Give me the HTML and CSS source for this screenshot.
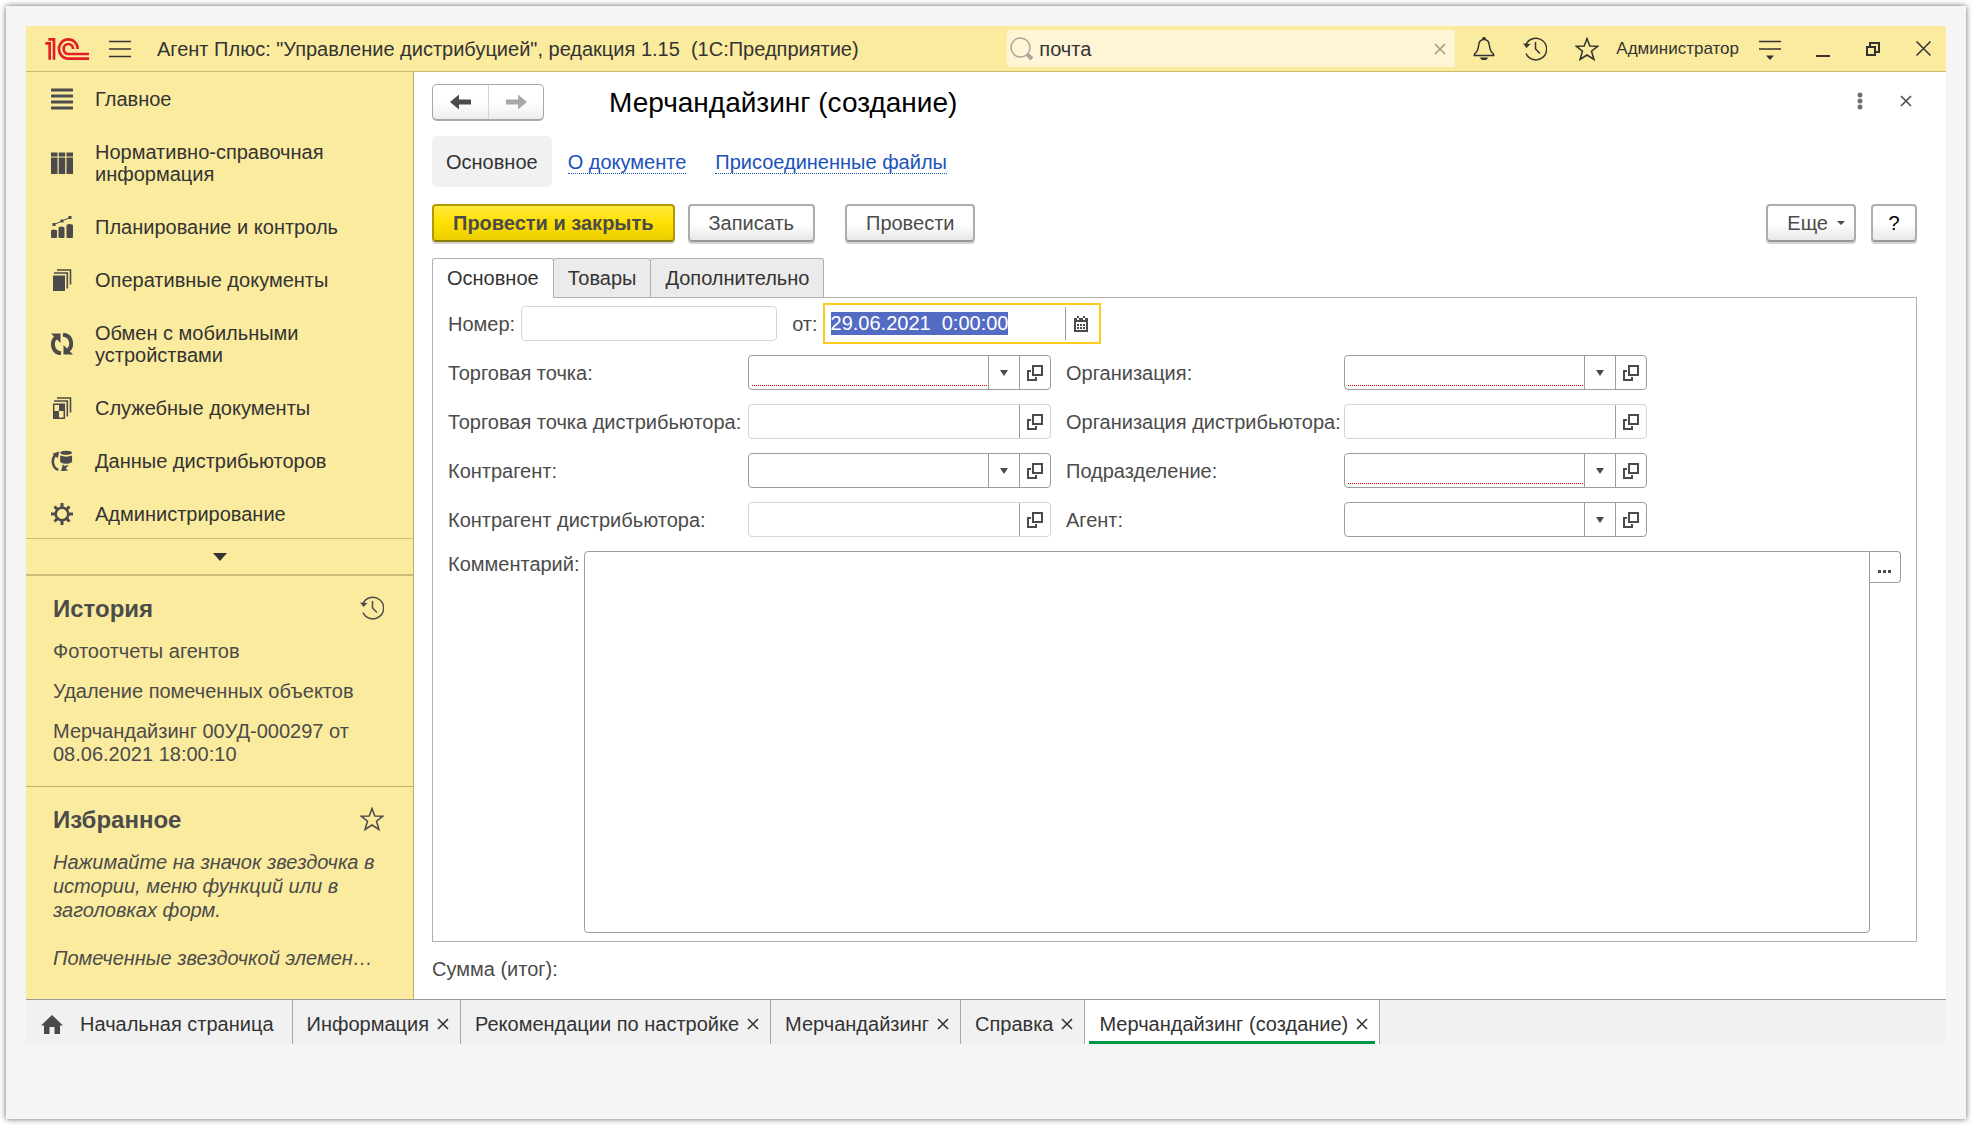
FILE: index.html
```html
<!DOCTYPE html>
<html lang="ru">
<head>
    <meta charset="UTF-8">
    <meta name="viewport" content="width=device-width, initial-scale=1.0">
    <title>Мерчандайзинг (создание)</title>
    <link rel="stylesheet" href="styles.css">
</head>
<body>
    <!-- shared icons -->
    <svg class="sprite" aria-hidden="true">
        <symbol id="i-history" viewBox="0 0 24 24">
            <path d="M3.2 7.2A10.8 10.8 0 1 1 3 16.5" fill="none" stroke="currentColor" stroke-width="1.5"/>
            <path d="M0 6.5l7.5.5-4 4z" fill="currentColor"/>
            <path d="M12.5 5v7l4.5 4.5" fill="none" stroke="currentColor" stroke-width="1.5"/>
        </symbol>
        <symbol id="i-star" viewBox="0 0 24 24">
            <path d="M12 1.5l2.8 7.4 8 .3-6.3 5 2.5 8.3-7-4.5-7 4.5 2.5-8.3-6.3-5 8-.3z" fill="none" stroke="currentColor" stroke-width="1.5"/>
        </symbol>
        <symbol id="i-close" viewBox="0 0 12 12">
            <path d="M1 1l10 10M11 1L1 11" fill="none" stroke="currentColor" stroke-width="1.6"/>
        </symbol>
        <symbol id="i-open" viewBox="0 0 16 16">
            <path d="M6 1h9v9H6z" fill="none" stroke="currentColor" stroke-width="2"/>
            <path d="M4 6H1v9h8v-3" fill="none" stroke="currentColor" stroke-width="2"/>
        </symbol>
        <symbol id="i-down" viewBox="0 0 8 6">
            <path d="M0 0h8L4 6z" fill="currentColor"/>
        </symbol>
    </svg>

    <div class="frame">
        <div class="app">
            <header class="topbar">
                <svg class="logo" viewBox="0 0 132 66" role="img" aria-label="1С">
                    <path d="M1 16H14V65M10 4H27V65M98 33A28 29 0 1 0 70 62H132M84 33A14 15 0 1 0 70 48H132" fill="none" stroke="#e01f26" stroke-width="8"/>
                </svg>
                <button class="icon-btn menu-btn" aria-label="Меню">
                    <svg width="22" height="18" viewBox="0 0 22 18"><path d="M0 1.5h22M0 9h22M0 16.5h22" stroke="currentColor" stroke-width="1.5"/></svg>
                </button>
                <div class="app-title">Агент Плюс: "Управление дистрибуцией", редакция 1.15&nbsp; (1С:Предприятие)</div>
                <div class="search">
                    <svg width="24" height="24" viewBox="0 0 24 24"><circle cx="10.5" cy="10.5" r="9.5" fill="none" stroke="#a9a79c" stroke-width="1.5"/><path d="M17 17l5 5" stroke="#a9a79c" stroke-width="4"/></svg>
                    <input type="text" value="почта" aria-label="Поиск">
                    <button class="icon-btn clear-btn" aria-label="Очистить"><svg width="12" height="12"><use href="#i-close"/></svg></button>
                </div>
                <div class="tools">
                    <button class="icon-btn" aria-label="Уведомления">
                        <svg width="22" height="24" viewBox="0 0 22 24">
                            <path d="M11 2.5c-3.5 0-5 2.5-5.3 5.5-.4 5-1.7 7-4.4 9.5v1h19.4v-1c-2.7-2.5-4-4.5-4.4-9.5C16 5 14.5 2.5 11 2.5z" fill="none" stroke="currentColor" stroke-width="1.5"/>
                            <path d="M9 2a2 2 0 0 1 4 0zM6.5 20.5h9L13 23H9z" fill="currentColor"/>
                        </svg>
                    </button>
                    <button class="icon-btn" aria-label="История"><svg width="24" height="24"><use href="#i-history"/></svg></button>
                    <button class="icon-btn" aria-label="Избранное"><svg width="24" height="24"><use href="#i-star"/></svg></button>
                </div>
                <a class="user" href="#">Администратор</a>
                <button class="icon-btn service-btn" aria-label="Сервис">
                    <svg width="22" height="20" viewBox="0 0 22 20"><path d="M0 1.5h22M0 9h22" stroke="currentColor" stroke-width="1.5"/><path d="M7 15.5h8L11 20z" fill="currentColor"/></svg>
                </button>
                <div class="window-btns">
                    <button class="icon-btn" aria-label="Свернуть"><svg width="14" height="16" viewBox="0 0 14 16"><path d="M0 15h14" stroke="currentColor" stroke-width="2"/></svg></button>
                    <button class="icon-btn" aria-label="Развернуть"><svg width="14" height="14" viewBox="0 0 14 14"><path d="M1 5h8v8H1zM4 5V1h9v9H9" fill="none" stroke="currentColor" stroke-width="2"/></svg></button>
                    <button class="icon-btn" aria-label="Закрыть"><svg width="15" height="15" viewBox="0 0 15 15"><path d="M.5.5l14 14M14.5.5l-14 14" stroke="currentColor" stroke-width="1.5"/></svg></button>
                </div>
            </header>

            <div class="body">
                <aside class="sidebar">
                    <nav class="sections">
                        <a href="#">
                            <svg viewBox="0 0 22 22"><path d="M1 2h20M1 8h20M1 14h20M1 20h20" stroke="currentColor" stroke-width="3" stroke-linecap="round"/></svg>
                            <span>Главное</span>
                        </a>
                        <a href="#">
                            <svg viewBox="0 0 22 22"><path d="M0 .5h6.5v4H0zM7.700.5h6.5v4H7.700zM15.500.5H22v4h-6.500zM0 5.500h6.500V22H0zM7.700 5.500h6.500V22H7.700zM15.500 5.500H22V22h-6.500z" fill="currentColor"/></svg>
                            <span>Нормативно-справочная<br>информация</span>
                        </a>
                        <a href="#">
                            <svg viewBox="0 0 22 22"><path d="M0 15q0-1.500 3-1.500t3 1.500v6q0 1-1 1H1q-1 0-1-1zM7.500 12q0-1.500 3-1.500t3 1.500v9q0 1-1 1h-4q-1 0-1-1zM15.500 9.500Q15.500 8 18.700 8T22 9.500V21q0 1-1 1h-4.500q-1 0-1-1z" fill="currentColor"/><path d="M3 8.500L11 5l8-3.500" stroke="currentColor" fill="none"/><path d="M1.500 7h3v3h-3zM9.500 3.500h3v3h-3zM17.500 0h3v3h-3z" fill="currentColor"/></svg>
                            <span>Планирование и контроль</span>
                        </a>
                        <a href="#">
                            <svg viewBox="0 0 22 22"><path d="M2 6.5h12V22H2z" fill="currentColor"/><path d="M3 4h13.300v15.500M6 1h13.500v14.500" fill="none" stroke="currentColor" stroke-width="1.6"/></svg>
                            <span>Оперативные документы</span>
                        </a>
                        <a href="#">
                            <svg viewBox="0 0 22 22"><path d="M10 20.5C0 19 0 7 6 4M12 1.5c10 1.500 10 13 4 16.500" fill="none" stroke="currentColor" stroke-width="4"/><path d="M0 .5h9.500V10zM22 21.500h-9.500V12z" fill="currentColor"/></svg>
                            <span>Обмен с мобильными<br>устройствами</span>
                        </a>
                        <a href="#">
                            <svg viewBox="0 0 22 22"><path d="M2.700 7.200h10.600v14H2.700z" fill="none" stroke="currentColor" stroke-width="1.5"/><path d="M8 7h5.500v7H8zM2.500 14H8v7.500H2.500z" fill="currentColor"/><path d="M3 4h13.300v15.500M6 1h13.500v14.500" fill="none" stroke="currentColor" stroke-width="1.6"/></svg>
                            <span>Служебные документы</span>
                        </a>
                        <a href="#">
                            <svg viewBox="0 0 24 24"><ellipse cx="16.500" cy="3" rx="6.500" ry="2.200" fill="currentColor"/><path d="M10 6q6.500 2.500 13 0v7q-6.500 4-13 0z" fill="currentColor"/><path d="M5 5C0 10 1.500 20 8 21.500" fill="none" stroke="currentColor" stroke-width="2.800"/><path d="M1.500 4L9 1.500 7.500 9zM19 16q-1 2.500-3 4l2.500 2.500L11 23l2-7.500 1.500 2z" fill="currentColor"/></svg>
                            <span>Данные дистрибьюторов</span>
                        </a>
                        <a href="#">
                            <svg viewBox="0 0 22 22"><circle cx="11" cy="11" r="6.300" fill="none" stroke="currentColor" stroke-width="2.600"/><path d="M11 0v5M11 17v5M0 11h5M17 11h5M3.500 3.500L7 7M15 15l3.500 3.500M3.500 18.500L7 15M15 7l3.500-3.500" stroke="currentColor" stroke-width="3"/></svg>
                            <span>Администрирование</span>
                        </a>
                    </nav>
                    <button class="more-sections" aria-label="Показать ещё"><svg width="14" height="8" viewBox="0 0 14 8"><path d="M0 0h14L7 8z" fill="currentColor"/></svg></button>

                    <section class="side-block history">
                        <div class="side-head">
                            <h2>История</h2>
                            <svg width="24" height="24"><use href="#i-history"/></svg>
                        </div>
                        <ul>
                            <li><a href="#">Фотоотчеты агентов</a></li>
                            <li><a href="#">Удаление помеченных объектов</a></li>
                            <li><a href="#">Мерчандайзинг 00УД-000297 от 08.06.2021 18:00:10</a></li>
                        </ul>
                    </section>

                    <section class="side-block favorites">
                        <div class="side-head">
                            <h2>Избранное</h2>
                            <svg width="24" height="24"><use href="#i-star"/></svg>
                        </div>
                        <p>Нажимайте на значок звездочка в истории, меню функций или в заголовках форм.</p>
                        <p>Помеченные звездочкой элемен…</p>
                    </section>
                </aside>

                <main class="content">
                    <div class="form-head">
                        <div class="nav-btns">
                            <button aria-label="Назад"><svg width="22" height="16" viewBox="0 0 22 16"><path d="M0 8l9-7.500v5h12v5H9v5z" fill="currentColor"/></svg></button>
                            <button class="inactive" aria-label="Вперед"><svg width="22" height="16" viewBox="0 0 22 16"><path d="M22 8l-9-7.500v5H1v5h12v5z" fill="currentColor"/></svg></button>
                        </div>
                        <h1>Мерчандайзинг (создание)</h1>
                        <button class="icon-btn" aria-label="Действия"><svg width="6" height="18" viewBox="0 0 6 18"><g fill="#707070"><circle cx="3" cy="3" r="2.5"/><circle cx="3" cy="9" r="2.5"/><circle cx="3" cy="15" r="2.5"/></g></svg></button>
                        <button class="icon-btn" aria-label="Закрыть форму"><svg width="12" height="12"><use href="#i-close"/></svg></button>
                    </div>

                    <nav class="form-nav">
                        <a class="current" href="#">Основное</a>
                        <a href="#"><span>О документе</span></a>
                        <a href="#"><span>Присоединенные файлы</span></a>
                    </nav>

                    <div class="commands">
                        <button class="btn primary">Провести и закрыть</button>
                        <button class="btn">Записать</button>
                        <button class="btn post">Провести</button>
                        <button class="btn more">Еще <svg width="8" height="4" viewBox="0 0 8 4"><path d="M0 0h8L4 4z" fill="currentColor"/></svg></button>
                        <button class="btn help">?</button>
                    </div>

                    <div class="tabs" role="tablist">
                        <button class="tab active" role="tab">Основное</button>
                        <button class="tab" role="tab">Товары</button>
                        <button class="tab" role="tab">Дополнительно</button>
                    </div>

                    <div class="panel">
                        <div class="number-row">
                            <label for="number">Номер:</label>
                            <input class="field readonly number" id="number" type="text">
                            <label class="from" for="date">от:</label>
                            <div class="date-field">
                                <input id="date" type="text" value="29.06.2021  0:00:00">
                                <button aria-label="Выбрать дату">
                                    <svg width="14" height="16" viewBox="0 0 14 16"><path d="M1 3h12v12H1z" fill="#fff" stroke="currentColor" stroke-width="2"/><path d="M1 2h12v4H1zM3 0h2v2H3zM9 0h2v2H9z" fill="currentColor"/><path d="M3 2h2v2H3zM9 2h2v2H9z" fill="#fff"/><path d="M3 8h2v2H3zM6 8h2v2H6zM9 8h2v2H9zM3 11h2v2H3zM6 11h2v2H6zM9 11h2v2H9z" fill="currentColor"/></svg>
                                </button>
                            </div>
                        </div>

                        <div class="fields">
                            <label for="outlet">Торговая точка:</label>
                            <div class="field combo required">
                                <select id="outlet"><option></option></select>
                                <span class="arrow"><svg width="8" height="6"><use href="#i-down"/></svg></span>
                                <button aria-label="Открыть"><svg width="16" height="16"><use href="#i-open"/></svg></button>
                            </div>
                            <label for="org">Организация:</label>
                            <div class="field combo required">
                                <select id="org"><option></option></select>
                                <span class="arrow"><svg width="8" height="6"><use href="#i-down"/></svg></span>
                                <button aria-label="Открыть"><svg width="16" height="16"><use href="#i-open"/></svg></button>
                            </div>

                            <label for="outlet-dist">Торговая точка дистрибьютора:</label>
                            <div class="field combo readonly">
                                <input id="outlet-dist" type="text" readonly>
                                <button aria-label="Открыть"><svg width="16" height="16"><use href="#i-open"/></svg></button>
                            </div>
                            <label for="org-dist">Организация дистрибьютора:</label>
                            <div class="field combo readonly">
                                <input id="org-dist" type="text" readonly>
                                <button aria-label="Открыть"><svg width="16" height="16"><use href="#i-open"/></svg></button>
                            </div>

                            <label for="partner">Контрагент:</label>
                            <div class="field combo">
                                <select id="partner"><option></option></select>
                                <span class="arrow"><svg width="8" height="6"><use href="#i-down"/></svg></span>
                                <button aria-label="Открыть"><svg width="16" height="16"><use href="#i-open"/></svg></button>
                            </div>
                            <label for="dept">Подразделение:</label>
                            <div class="field combo required">
                                <select id="dept"><option></option></select>
                                <span class="arrow"><svg width="8" height="6"><use href="#i-down"/></svg></span>
                                <button aria-label="Открыть"><svg width="16" height="16"><use href="#i-open"/></svg></button>
                            </div>

                            <label for="partner-dist">Контрагент дистрибьютора:</label>
                            <div class="field combo readonly">
                                <input id="partner-dist" type="text" readonly>
                                <button aria-label="Открыть"><svg width="16" height="16"><use href="#i-open"/></svg></button>
                            </div>
                            <label for="agent">Агент:</label>
                            <div class="field combo">
                                <select id="agent"><option></option></select>
                                <span class="arrow"><svg width="8" height="6"><use href="#i-down"/></svg></span>
                                <button aria-label="Открыть"><svg width="16" height="16"><use href="#i-open"/></svg></button>
                            </div>
                        </div>

                        <div class="comment-row">
                            <label for="comment">Комментарий:</label>
                            <textarea id="comment"></textarea>
                            <button aria-label="Редактировать комментарий"><svg width="14" height="3" viewBox="0 0 14 3"><path d="M0 0h3v3H0zM5 0h3v3H5zM10 0h3v3h-3z" fill="currentColor"/></svg></button>
                        </div>
                    </div>

                    <div class="total">Сумма (итог):</div>
                </main>
            </div>

            <footer class="taskbar">
                <button class="task home">
                    <svg width="22" height="19" viewBox="0 0 22 19"><path d="M11 0l11 10.500h-3V19h-5.500v-7h-5v7H3v-8.500H0z" fill="#4b4b4b"/></svg>
                    <span>Начальная страница</span>
                </button>
                <button class="task"><span>Информация</span><svg width="12" height="12"><use href="#i-close"/></svg></button>
                <button class="task"><span>Рекомендации по настройке</span><svg width="12" height="12"><use href="#i-close"/></svg></button>
                <button class="task"><span>Мерчандайзинг</span><svg width="12" height="12"><use href="#i-close"/></svg></button>
                <button class="task"><span>Справка</span><svg width="12" height="12"><use href="#i-close"/></svg></button>
                <button class="task active"><span>Мерчандайзинг (создание)</span><svg width="12" height="12"><use href="#i-close"/></svg></button>
            </footer>
        </div>
    </div>

    <script>
        // the date is ready to be overwritten as soon as the form opens
        const dateInput = document.getElementById('date');
        dateInput.focus();
        dateInput.select();
    </script>
</body>
</html>
```

FILE: styles.css
```css
* {
    box-sizing: border-box;
}

body {
    margin: 0;
    min-height: 100vh;
    display: flex;
    padding: 6px;
    background-color: #fff;
    color: #333;
    font-family: "Liberation Sans", Arial, sans-serif;
    font-size: 20px;
    line-height: 23px;
}

button,
input,
select,
textarea {
    font: inherit;
    color: inherit;
}

button {
    cursor: pointer;
}

label {
    padding-top: 2px;
    white-space: nowrap;
}

svg {
    display: block;
    flex: none;
}

.sprite {
    position: absolute;
    width: 0;
    height: 0;
}

.frame {
    flex: 1;
    display: flex;
    padding: 20px 20px 75px;
    background-color: #f6f5f3;
    box-shadow: 0 0 6px rgba(0, 0, 0, 0.6);
}

.app {
    flex: 1;
    display: flex;
    flex-direction: column;
    background-color: #fff;
}

.icon-btn {
    display: flex;
    align-items: center;
    justify-content: center;
    padding: 0;
    border: none;
    background: none;
}

/* top bar */
.topbar {
    display: flex;
    align-items: center;
    height: 46px;
    padding: 0 15px 0 19px;
    background-color: #fbeb9e;
    border-bottom: 1px solid #c9bc6c;
}

.logo {
    width: 44px;
    height: 22px;
}

.menu-btn {
    margin: 0 26px 0 20px;
}

.app-title {
    flex: 1;
    padding-top: 2px;
    white-space: nowrap;
}

.search {
    display: flex;
    align-items: center;
    width: 448px;
    height: 37px;
    padding: 0 8px 0 3px;
    border-radius: 3px;
    background-color: #fdf5d5;
}

.search input {
    flex: 1;
    min-width: 0;
    padding: 2px 5px 0;
    border: none;
    background: none;
    outline: none;
}

.search .clear-btn {
    width: 14px;
    color: #a39e87;
}

.tools {
    display: flex;
    gap: 28px;
    margin: 0 17px 0 18px;
}

.user {
    color: #333;
    font-size: 17px;
    text-decoration: none;
}

.service-btn {
    margin: 2px 35px 0 20px;
}

.window-btns {
    display: flex;
    align-items: center;
    gap: 36px;
}

.body {
    flex: 1;
    display: flex;
}

/* left panel */
.sidebar {
    width: 388px;
    flex: none;
    background-color: #fbeb9e;
    border-right: 1px solid #c0b260;
}

.sections {
    display: flex;
    flex-direction: column;
    gap: 31px;
    padding: 16px 20px 13px 25px;
    line-height: 22px;
}

.sections a {
    display: flex;
    align-items: center;
    gap: 22px;
    color: #333;
    text-decoration: none;
}

.sections svg {
    width: 22px;
    height: 22px;
    color: #4b4b4b;
}

.more-sections {
    display: flex;
    align-items: center;
    justify-content: center;
    width: 100%;
    height: 38px;
    padding: 0;
    border: none;
    border-top: 1px solid #c9bc7c;
    border-bottom: 2px solid #c9bc7c;
    background: none;
}

.side-block {
    padding: 18px 29px 0 27px;
    color: #4b4b4b;
}

.side-head {
    display: flex;
    align-items: center;
    justify-content: space-between;
    height: 28px;
}

.side-head h2 {
    margin: 0;
    font-size: 24px;
}

.history {
    padding-bottom: 20px;
    border-bottom: 1px solid #c0b260;
}

.history ul {
    display: flex;
    flex-direction: column;
    gap: 17px;
    margin: 18px 0 0;
    padding: 0;
    list-style: none;
}

.history a {
    color: inherit;
    text-decoration: none;
}

.favorites p {
    margin: 17px 0 24px;
    font-style: italic;
    line-height: 24px;
}

.favorites p + p {
    margin: 0;
    white-space: nowrap;
}

/* document form */
.content {
    flex: 1;
    min-width: 0;
    display: flex;
    flex-direction: column;
    padding: 12px 29px 18px 18px;
    color: #4b4b4b;
}

.form-head {
    display: flex;
    align-items: center;
    gap: 37px;
    padding-right: 5px;
}

.form-head h1 {
    flex: 1;
    margin: 0 0 0 28px;
    color: #000;
    font-size: 28px;
    font-weight: normal;
    line-height: 32px;
}

.form-head .icon-btn {
    padding-bottom: 4px;
}

.nav-btns {
    display: flex;
    border: 1px solid #a8a8a8;
    border-bottom-width: 2px;
    border-radius: 5px;
    background: linear-gradient(#fff 50%, #ededed);
}

.nav-btns button {
    display: flex;
    align-items: center;
    justify-content: center;
    width: 55px;
    height: 34px;
    padding: 0;
    border: none;
    background: none;
}

.nav-btns .inactive {
    border-left: 1px solid #d5d5d5;
    color: #a8a8a8;
}

.form-nav {
    display: flex;
    align-items: center;
    gap: 29px;
    margin-top: 15px;
}

.form-nav a {
    color: #1a52b8;
    text-decoration: none;
}

.form-nav span {
    display: block;
    padding-top: 2px;
    line-height: 21px;
    border-bottom: 1px dotted #1a52b8;
}

.form-nav .current {
    margin-right: -13px;
    padding: 15px 14px 13px;
    border-radius: 5px;
    background-color: #f1f1f1;
    color: #333;
}

.commands {
    display: flex;
    gap: 13px;
    margin-top: 17px;
}

.btn {
    height: 38px;
    padding: 0 19px;
    border: 2px solid #adadad;
    border-bottom-color: #999;
    border-radius: 4px;
    background: linear-gradient(#fff 50%, #e8e8e8);
    box-shadow: 0 2px 0 #d2d2d2;
}

.btn.primary {
    border-color: #b09a00;
    border-bottom-color: #8f7d00;
    background: linear-gradient(#ffea3c, #ffe000 50%, #ebce00);
    font-weight: bold;
}

.btn.post {
    margin-left: 17px;
}

.btn.more {
    display: flex;
    align-items: center;
    gap: 9px;
    margin-left: auto;
    padding-right: 9px;
}

.btn.help {
    width: 46px;
    margin-left: 2px;
    padding: 0;
    color: #000;
}

.tabs {
    display: flex;
    margin-top: 16px;
}

.tab {
    height: 39px;
    margin-right: -1px;
    padding: 0 14px;
    border: 1px solid #b0b0b0;
    border-bottom: none;
    border-radius: 3px 3px 0 0;
    background-color: #ebebeb;
    color: #333;
}

/* covers the top border of the panel */
.tab.active {
    z-index: 1;
    height: 40px;
    margin-bottom: -1px;
    background-color: #fff;
}

.panel {
    flex: 1;
    display: flex;
    flex-direction: column;
    padding: 5px 15px 8px;
    border: 1px solid #b0b0b0;
}

.number-row {
    display: flex;
    align-items: center;
}

.field {
    height: 35px;
    border: 1px solid #9c9c9c;
    border-radius: 4px;
    background-color: #fff;
}

.field.readonly {
    border-color: #d5d5d5;
}

.number {
    width: 256px;
    margin: 0 15px 0 6px;
    padding: 0 8px;
}

.from {
    margin-right: 5px;
}

.date-field {
    display: flex;
    width: 278px;
    height: 41px;
    padding: 2px;
    border: 2px solid #fccc1e;
}

.date-field input {
    flex: 1;
    min-width: 0;
    padding: 0 4px;
    border: none;
    outline: none;
}

.date-field input::selection {
    background-color: #546bc4;
    color: #fff;
}

.date-field button {
    display: flex;
    align-items: center;
    justify-content: center;
    width: 32px;
    padding: 0;
    border: none;
    border-left: 1px solid #9c9c9c;
    background: none;
}

.fields {
    display: grid;
    grid-template-columns: 291px 303px 275px 303px;
    column-gap: 9px;
    row-gap: 14px;
    align-items: center;
    margin-top: 11px;
}

.fields label:nth-of-type(even) {
    margin-left: 6px;
}

.combo {
    position: relative;
    display: flex;
}

.combo input,
.combo select {
    flex: 1;
    min-width: 0;
    padding: 0 8px;
    border: none;
    background: none;
    outline: none;
    appearance: none;
}

.combo button {
    display: flex;
    align-items: center;
    justify-content: center;
    width: 31px;
    padding: 0;
    border: none;
    border-left: 1px solid #9c9c9c;
    background: none;
}

.arrow {
    position: absolute;
    top: 0;
    right: 31px;
    bottom: 0;
    width: 31px;
    display: flex;
    align-items: center;
    justify-content: center;
    border-left: 1px solid #9c9c9c;
    pointer-events: none;
}

/* dotted line under a value that must be filled in */
.required::after {
    content: "";
    position: absolute;
    left: 3px;
    right: 63px;
    bottom: 3px;
    border-bottom: 1px dotted #e00000;
}

.comment-row {
    flex: 1;
    display: flex;
    align-items: flex-start;
    margin-top: 14px;
}

.comment-row textarea {
    flex: 1;
    align-self: stretch;
    margin-left: 4px;
    padding: 5px 8px;
    border: 1px solid #9c9c9c;
    border-radius: 4px 0 4px 4px;
    outline: none;
    resize: none;
}

.comment-row button {
    display: flex;
    align-items: center;
    justify-content: center;
    width: 31px;
    height: 32px;
    padding: 9px 0 0;
    border: 1px solid #9c9c9c;
    border-left: none;
    border-radius: 0 4px 4px 0;
    background: none;
}

.total {
    margin-top: 16px;
}

/* open windows */
.taskbar {
    display: flex;
    height: 45px;
    border-top: 1px solid #999;
    background-color: #f1f1f1;
}

.task {
    display: flex;
    align-items: center;
    gap: 8px;
    padding: 4px 11px 0 14px;
    border: none;
    border-right: 1px solid #a8a8a8;
    background: none;
    color: #333;
}

.task.home {
    gap: 17px;
    padding-left: 15px;
    padding-right: 18px;
}

.task.active {
    position: relative;
    background-color: #fff;
}

.task.active::after {
    content: "";
    position: absolute;
    left: 4px;
    right: 4px;
    bottom: 0;
    height: 3px;
    background-color: #009846;
}
```
